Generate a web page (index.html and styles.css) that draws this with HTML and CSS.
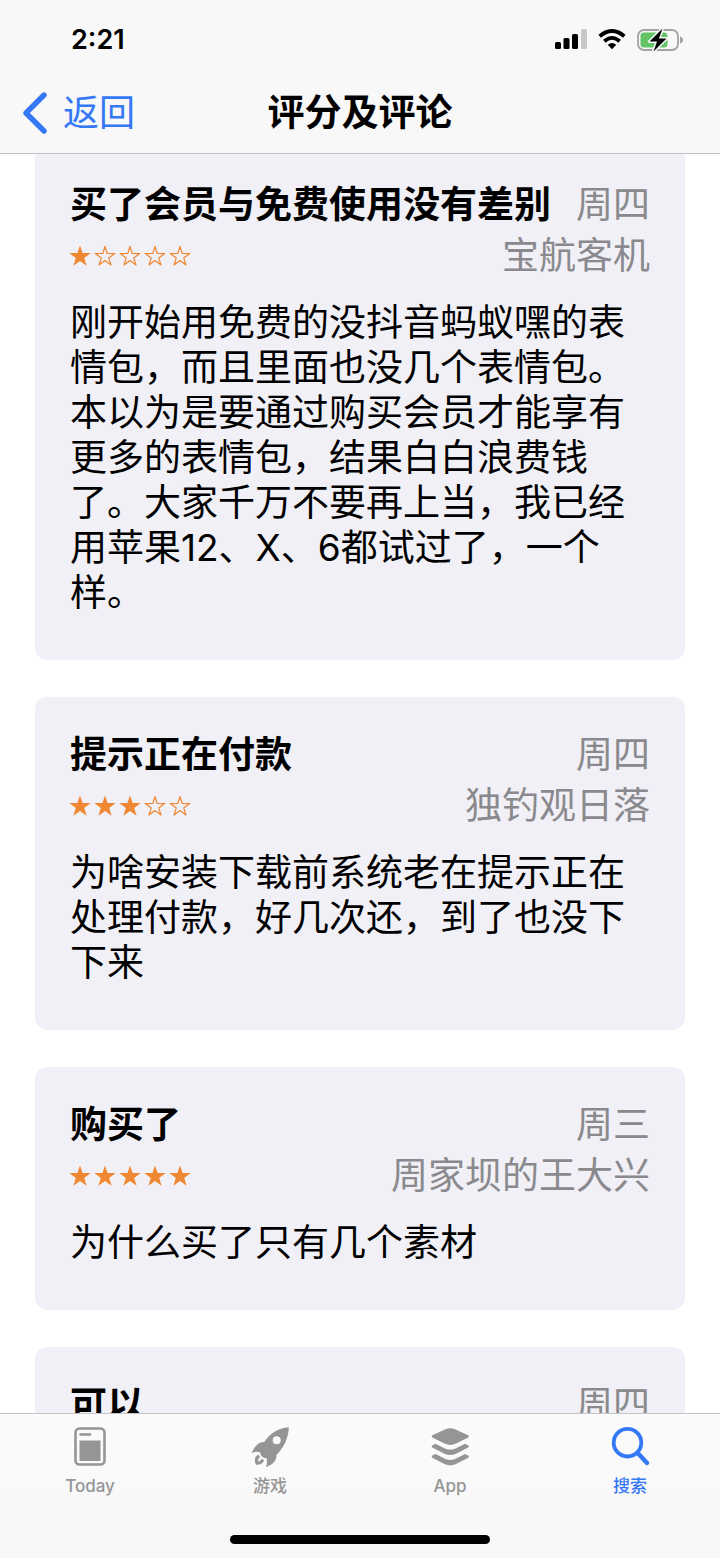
FILE: index.html
```
<!DOCTYPE html>
<html lang="zh-CN">
<head>
<meta charset="utf-8">
<meta name="viewport" content="width=device-width, initial-scale=1">
<title>评分及评论</title>
<link rel="stylesheet" href="styles.css">
</head>
<body>
<svg class="defs" aria-hidden="true">
  <symbol id="star-on" viewBox="0 0 22 22"><path d="M11 .4 13.600 8 21.700 8.100 15.200 13 17.600 20.800 11 16.100 4.400 20.800 6.800 13 .3 8.100 8.400 8Z" fill="currentColor"/></symbol>
  <symbol id="star-off" viewBox="0 0 22 22"><path d="M11 1.500 13.200 8.500 20.800 8.600 14.700 12.900 17 20 11 15.600 5 20 7.300 12.900 1.200 8.600 8.800 8.500Z" fill="none" stroke="currentColor" stroke-width="1.200" stroke-linejoin="round"/></symbol>
</svg>
<div class="app">
  <header class="top">
    <div class="status">
      <span class="time">2:21</span>
      <div class="indicators">
        <svg width="32" height="21" viewBox="0 0 32 21" role="img" aria-label="信号">
          <rect x="0" y="13" width="6" height="7" rx="1.500"/><rect x="8.500" y="9" width="6" height="11" rx="1.500"/><rect x="17" y="5" width="6" height="15" rx="1.500"/><rect x="26" y="0" width="6" height="20" rx="1.500" fill="#c8c8c9"/>
        </svg>
        <svg width="28" height="21" viewBox="0 0 28 21" role="img" aria-label="无线网络">
          <g fill="none" stroke="#000" stroke-width="3.800"><path d="M1.700 7.200Q14-3.300 26.300 7.200"/><path d="M6.300 12.200Q14 5.600 21.700 12.200"/></g>
          <path d="M9.700 15.800Q14 12.300 18.300 15.800L14 20.300Z"/>
        </svg>
        <svg width="46" height="24" viewBox="0 0 46 24" role="img" aria-label="正在充电">
          <rect x="1" y="2" width="40" height="20" rx="6" fill="none" stroke="#a3a3a4" stroke-width="1.800"/>
          <path d="M43 8.500Q46 9.500 46 12T43 15.500Z" fill="#a3a3a4"/>
          <rect x="3.500" y="4.500" width="27" height="15" rx="3.500" fill="#63c466"/>
          <path d="M25.500.5 12.500 13.500H20L16.500 23.500 29.500 10.500H22Z" stroke="#fafafa" stroke-width="3" stroke-linejoin="round" paint-order="stroke"/>
        </svg>
      </div>
    </div>
    <nav class="navbar">
      <a class="back" href="#"><svg width="26" height="42" viewBox="0 0 26 42" aria-hidden="true"><path d="M22 3 4 21 22 39" fill="none" stroke="currentColor" stroke-width="5.400" stroke-linecap="round" stroke-linejoin="round"/></svg>返回</a>
      <h1 class="title">评分及评论</h1>
    </nav>
  </header>

  <main class="reviews">
    <div class="list">
      <article class="card">
        <div class="row"><h2 class="heading">买了会员与免费使用没有差别</h2><span class="meta">周四</span></div>
        <div class="row">
          <div class="stars" role="img" aria-label="1 星"><svg><use href="#star-on"/></svg><svg><use href="#star-off"/></svg><svg><use href="#star-off"/></svg><svg><use href="#star-off"/></svg><svg><use href="#star-off"/></svg></div>
          <span class="meta">宝航客机</span>
        </div>
        <p class="text">刚开始用免费的没抖音蚂蚁嘿的表情包，而且里面也没几个表情包。本以为是要通过购买会员才能享有更多的表情包，结果白白浪费钱了。大家千万不要再上当，我已经用苹果12、X、6都试过了，一个样。</p>
      </article>
      <article class="card">
        <div class="row"><h2 class="heading">提示正在付款</h2><span class="meta">周四</span></div>
        <div class="row">
          <div class="stars" role="img" aria-label="3 星"><svg><use href="#star-on"/></svg><svg><use href="#star-on"/></svg><svg><use href="#star-on"/></svg><svg><use href="#star-off"/></svg><svg><use href="#star-off"/></svg></div>
          <span class="meta">独钓观日落</span>
        </div>
        <p class="text">为啥安装下载前系统老在提示正在处理付款，好几次还，到了也没下下来</p>
      </article>
      <article class="card">
        <div class="row"><h2 class="heading">购买了</h2><span class="meta">周三</span></div>
        <div class="row">
          <div class="stars" role="img" aria-label="5 星"><svg><use href="#star-on"/></svg><svg><use href="#star-on"/></svg><svg><use href="#star-on"/></svg><svg><use href="#star-on"/></svg><svg><use href="#star-on"/></svg></div>
          <span class="meta">周家坝的王大兴</span>
        </div>
        <p class="text">为什么买了只有几个素材</p>
      </article>
      <article class="card">
        <div class="row"><h2 class="heading">可以</h2><span class="meta">周四</span></div>
      </article>
    </div>
  </main>

  <footer class="bottom">
    <nav class="tabs">
      <a class="tab" href="#">
        <svg width="40" height="40" viewBox="0 0 40 40" aria-hidden="true"><rect x="5.500" y="1.500" width="29" height="36" rx="4" fill="none" stroke="currentColor" stroke-width="2.600"/><path d="M10.500 7.500H20" stroke="currentColor" stroke-width="2.600" stroke-linecap="round"/><path d="M9.500 13.500H30.500V34H9.500Z" fill="currentColor"/></svg>
        Today
      </a>
      <a class="tab" href="#">
        <svg width="40" height="40" viewBox="0 0 40 40" aria-hidden="true"><g fill="currentColor"><path fill-rule="evenodd" d="M38.800.2C28 1 20 6.500 14.200 15 9 14.500 5 18.500 1.700 26.200 5.500 24.300 8 24.600 10.200 25.500 10.500 28.800 13 31 16.500 31.300 17.300 34 17 37 16 40 23.500 37.500 26.800 33 26.300 28 34 20.500 38.500 11 38.800.2ZM26.700 9.300A4 4 0 1 1 26.700 17.300 4 4 0 0 1 26.700 9.300Z"/><path d="M8.500 27.700C4.500 29 4 33 6 37.800 10 37.600 13.300 36.500 14 33.200L11.300 31.800C11 33.500 9.700 34.300 8.300 34.400 7.700 32.500 8.300 31 10.200 30.200Z"/></g></svg>
        游戏
      </a>
      <a class="tab" href="#">
        <svg width="40" height="40" viewBox="0 0 40 40" aria-hidden="true"><g fill="currentColor"><path d="M2.300 8.300 15 2.500Q20.300.2 25.500 2.500L38.200 8.300Q39.700 9.400 38.200 10.500L25.500 16.800Q20.300 19 15 16.800L2.300 10.500Q.8 9.400 2.300 8.300Z"/><path id="layer" d="M5.500 16.800 15.500 21.700Q20.300 23.500 25 21.700L35 16.800 38.200 18.300Q39.700 19.400 38.200 20.500L25.500 27Q20.300 29.200 15 27L2.300 20.500Q.8 19.400 2.300 18.300Z"/><use href="#layer" y="10.300"/></g></svg>
        App
      </a>
      <a class="tab active" href="#" aria-current="page">
        <svg width="40" height="40" viewBox="0 0 40 40" aria-hidden="true"><g fill="none" stroke="currentColor" stroke-width="3.800" stroke-linecap="round"><circle cx="17.500" cy="15.700" r="13.800"/><path d="M27.500 25.800 37 36" stroke-width="4.400"/></g></svg>
        搜索
      </a>
    </nav>
    <div class="home-bar"></div>
  </footer>
</div>
</body>
</html>
```
FILE: styles.css
```
* {
  box-sizing: border-box;
}

body {
  margin: 0;
  background: #fff;
  color: #000;
  font-family: Inter, "Noto Sans CJK SC", sans-serif;
}

h1,
h2,
p {
  margin: 0;
}

a {
  color: inherit;
  text-decoration: none;
}

.defs {
  display: none;
}

.app {
  display: flex;
  flex-direction: column;
  height: 100vh;
}

.top {
  flex: none;
  background: #f8f8f8;
  border-bottom: 1px solid #c4c4c6;
}

.status {
  display: flex;
  justify-content: space-between;
  align-items: center;
  height: 71px;
  padding: 8px 37px 0 71px;
}

.time {
  font-size: 27px;
  font-weight: 600;
  line-height: 32px;
}

.indicators {
  display: flex;
  align-items: center;
  gap: 11px;
}

.navbar {
  display: grid;
  grid-template-columns: 1fr auto 1fr;
  align-items: center;
  height: 82px;
  padding: 2px 22px 0;
}

.back {
  display: flex;
  align-items: center;
  gap: 15px;
  color: #3478f6;
  font-size: 36px;
  line-height: 48px;
}

.title {
  font-size: 37px;
  font-weight: 700;
  line-height: 48px;
}

.reviews {
  flex: 1;
  min-height: 0;
  overflow-y: auto;
  scrollbar-width: none;
}

.list {
  display: flex;
  flex-direction: column;
  gap: 37px;
  margin-top: -7px;
  padding: 0 35px;
}

.card {
  padding: 32px 35px 44px;
  border-radius: 12px;
  background: #f1f0f6;
}

.row {
  display: flex;
  justify-content: space-between;
  align-items: center;
  height: 51px;
  font-size: 37px;
  line-height: 51px;
  white-space: nowrap;
}

.heading {
  font-size: 37px;
  font-weight: 700;
}

.meta {
  color: #8a8a8e;
}

.stars {
  display: flex;
  gap: 3px;
  margin-left: -1px;
  color: #ef8733;
}

.stars svg {
  width: 22px;
  height: 22px;
}

.text {
  margin-top: 19px;
  padding-bottom: 1px;
  font-size: 37px;
  line-height: 45px;
}

.bottom {
  flex: none;
  padding-bottom: 14px;
  background: linear-gradient(#fbfbfb, #f7f7f7);
  border-top: 1px solid #c4c4c6;
}

.tabs {
  display: grid;
  grid-template-columns: repeat(4, 1fr);
  height: 121px;
  padding-top: 13px;
}

.tab {
  display: flex;
  flex-direction: column;
  align-items: center;
  gap: 6px;
  color: #959596;
  font-size: 17px;
  font-weight: 500;
  line-height: 26px;
}

.active {
  color: #3478f6;
}

.home-bar {
  width: 36%;
  height: 9px;
  margin: 0 auto;
  border-radius: 5px;
  background: #000;
}
```
